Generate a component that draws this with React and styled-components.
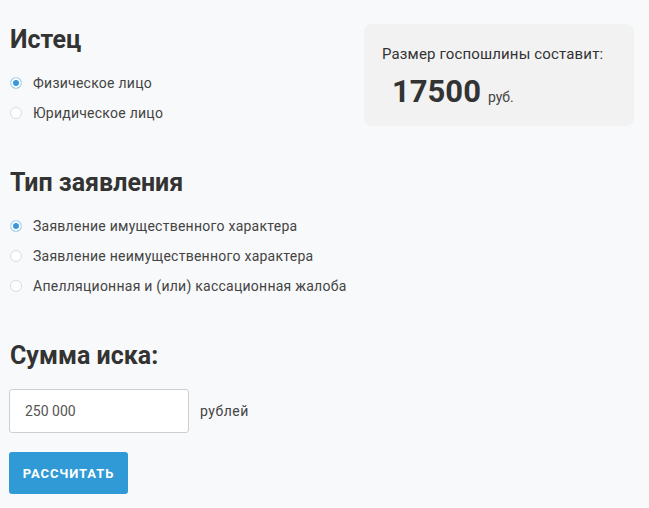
import styled, { createGlobalStyle } from 'styled-components';

const GlobalStyle = createGlobalStyle`
  body {
    margin: 0;
    background: #f8f9fa;
    font-family: Roboto, "Liberation Sans", sans-serif;
    color: #333;
  }
`;

// Обёртка калькулятора госпошлины
const Page = styled.div`
  padding: 24px 15px 14px 9px;
`;

const TopRow = styled.div`
  display: flex;
  justify-content: space-between;
  align-items: flex-start;
`;

const Section = styled.div`
  margin-top: ${(p) => p.$gap || 0}px;
`;

const Heading = styled.h2`
  margin: 0 0 13px;
  font-size: 25px;
  line-height: 31px;
  font-weight: 700;
  color: #333;
  padding-left: 1px;
`;

const Option = styled.label`
  display: flex;
  align-items: center;
  height: 30px;
  font-size: 14px;
  letter-spacing: 0.25px;
  color: #444;
  cursor: pointer;
`;

// Кастомная радиокнопка
const Radio = styled.span`
  box-sizing: border-box;
  width: 12px;
  height: 12px;
  margin: 0 11px 0 1px;
  border-radius: 50%;
  border: 1px solid ${(p) => (p.$checked ? '#b9dcf2' : '#dcdcdc')};
  background: ${(p) => (p.$checked ? '#3a98d8' : '#fff')};
  box-shadow: ${(p) => (p.$checked ? 'inset 0 0 0 2px #fff' : 'none')};
  flex-shrink: 0;
`;

const ResultCard = styled.div`
  width: 270px;
  box-sizing: border-box;
  height: 102px;
  padding: 21px 18px 0;
  background: #f2f2f2;
  border-radius: 8px;
`;

const ResultLabel = styled.div`
  font-size: 15px;
  letter-spacing: 0.15px;
  color: #333;
`;

const ResultValue = styled.div`
  display: flex;
  align-items: baseline;
  margin-top: 14px;
  padding-left: 10px;
`;

const Amount = styled.span`
  font-size: 31px;
  line-height: 30px;
  font-weight: 700;
  color: #333;
`;

const Currency = styled.span`
  font-size: 14px;
  color: #444;
  margin-left: 7px;
`;

const InputRow = styled.div`
  display: flex;
  align-items: center;
  margin-top: 18px;
`;

const SumInput = styled.input`
  box-sizing: border-box;
  width: 180px;
  height: 44px;
  padding: 0 15px;
  border: 1px solid #cfcfcf;
  border-radius: 3px;
  background: #fff;
  font-family: Roboto, "Liberation Sans", sans-serif;
  font-size: 14px;
  color: #555;
  outline: none;
`;

const Unit = styled.span`
  margin-left: 11px;
  font-size: 14px;
  letter-spacing: 0.5px;
  color: #444;
`;

const Button = styled.button`
  display: block;
  margin-top: 19px;
  width: 119px;
  height: 42px;
  border: none;
  border-radius: 3px;
  background: #2f9ad5;
  color: #fff;
  font-family: Roboto, "Liberation Sans", sans-serif;
  font-size: 13px;
  font-weight: 700;
  letter-spacing: 0.9px;
  text-transform: uppercase;
  cursor: pointer;
`;

const plaintiffs = [
  { label: 'Физическое лицо', checked: true },
  { label: 'Юридическое лицо' },
];

const claimTypes = [
  { label: 'Заявление имущественного характера', checked: true },
  { label: 'Заявление неимущественного характера' },
  { label: 'Апелляционная и (или) кассационная жалоба' },
];

const OptionList = ({ items }) =>
  items.map((item) => (
    <Option key={item.label}>
      <Radio $checked={item.checked} />
      {item.label}
    </Option>
  ));

export default function App() {
  return (
    <>
      <GlobalStyle />
      <Page>
        <TopRow>
          <div>
            <Heading>Истец</Heading>
            <OptionList items={plaintiffs} />
          </div>
          <ResultCard>
            <ResultLabel>Размер госпошлины составит:</ResultLabel>
            <ResultValue>
              <Amount>17500</Amount>
              <Currency>руб.</Currency>
            </ResultValue>
          </ResultCard>
        </TopRow>

        <Section $gap={39}>
          <Heading>Тип заявления</Heading>
          <OptionList items={claimTypes} />
        </Section>

        <Section $gap={39}>
          <Heading>Сумма иска:</Heading>
          <InputRow>
            <SumInput defaultValue="250 000" />
            <Unit>рублей</Unit>
          </InputRow>
          <Button>Рассчитать</Button>
        </Section>
      </Page>
    </>
  );
}
